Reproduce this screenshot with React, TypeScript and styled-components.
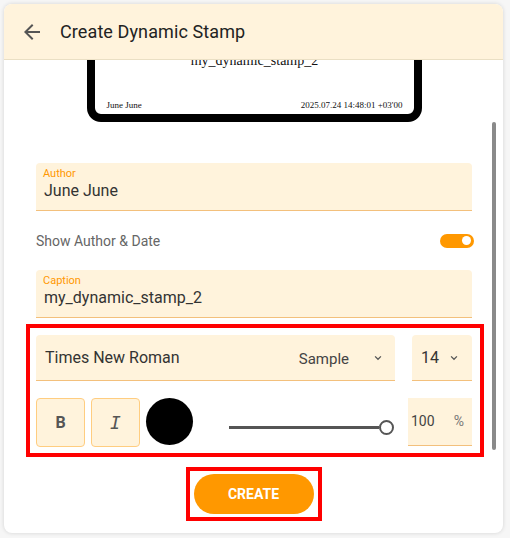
import React from "react";
import styled, { createGlobalStyle } from "styled-components";

const Global = createGlobalStyle`
  html, body { margin: 0; padding: 0; background: #f6f6f6; }
  body { font-family: Roboto, "Noto Sans", Arial, sans-serif; }
  * { box-sizing: border-box; }
`;

const Page = styled.div`
  padding: 4px 7px 5px 4px;
`;

const Dialog = styled.div`
  position: relative;
  width: 499px;
  height: 529px;
  background: #fff;
  border-radius: 8px;
  box-shadow: 0 0 4px rgba(0, 0, 0, 0.14);
  display: flex;
  flex-direction: column;
  overflow: hidden;
`;

const Header = styled.div`
  height: 56px;
  flex-shrink: 0;
  background: #fff3dc;
  border-bottom: 1px solid #eadfc4;
  display: flex;
  align-items: center;
  gap: 16px;
  padding-left: 16px;
  position: relative;
  z-index: 1;
`;

const Title = styled.div`
  font-size: 18px;
  color: #222;
  letter-spacing: 0.1px;
`;

const Scroll = styled.div`
  flex: 1;
  min-height: 0;
  overflow: hidden;
  display: flex;
  flex-direction: column;
  justify-content: flex-end;
`;

const Content = styled.div`
  flex-shrink: 0;
  display: flex;
  flex-direction: column;
  padding: 0 31px 5px 32px;
`;

const Stamp = styled.div`
  align-self: center;
  width: 335px;
  height: 120px;
  border: 8px solid #000;
  border-radius: 14px;
  background: #fff;
  display: flex;
  flex-direction: column;
  justify-content: flex-end;
  padding: 0 11px 3px 12px;
  font-family: "Liberation Serif", "Times New Roman", serif;
  color: #111;
  margin-bottom: 41px;
`;

const StampCaption = styled.div`
  text-align: center;
  font-size: 14px;
  line-height: 16px;
  margin-bottom: 30px;
`;

const StampFoot = styled.div`
  display: flex;
  justify-content: space-between;
  font-size: 9px;
  line-height: 12px;
`;

const Field = styled.div`
  height: 48px;
  background: #fff3dc;
  border-bottom: 1px solid #f3c07c;
  border-radius: 4px 4px 0 0;
  padding: 4px 8px 0 7px;
  display: flex;
  flex-direction: column;
`;

const Label = styled.div`
  font-size: 11px;
  line-height: 13px;
  color: #ff9800;
`;

const Value = styled.div`
  font-size: 16px;
  line-height: 22px;
  color: #333;
  padding-left: 1px;
`;

const ToggleRow = styled.div`
  height: 59px;
  display: flex;
  align-items: center;
  justify-content: space-between;
  font-size: 14px;
  color: #666;
`;

const Toggle = styled.div`
  width: 34px;
  height: 14px;
  border-radius: 7px;
  background: #ff9800;
  display: flex;
  align-items: center;
  justify-content: flex-end;
  padding: 0 3px;
  margin-right: -2px;
`;

const Knob = styled.div`
  width: 9px;
  height: 9px;
  border-radius: 50%;
  background: #fff;
`;

const Highlight = styled.div`
  border: 4px solid #ff0000;
  margin: ${(p: { $m: string }) => p.$m};
`;

const StyleBox = styled(Highlight)`
  padding: 7px 8px 6px 6px;
  display: flex;
  flex-direction: column;
  gap: 17px;
`;

const FontRow = styled.div`
  display: grid;
  grid-template-columns: 1fr 60px;
  gap: 17px;
`;

const Select = styled.div`
  height: 46px;
  background: #fff3dc;
  border-bottom: 1px solid #f3c07c;
  border-radius: 4px 4px 0 0;
  display: flex;
  align-items: center;
  padding: 0 ${(p: { $pr: number }) => p.$pr}px 0 9px;
  color: #333;
  font-size: 16px;
`;

const SelectText = styled.span`
  flex: 1;
`;

const Sample = styled.span`
  font-size: 15px;
  color: #444;
  margin-right: 24px;
  padding-top: 2px;
`;

const ToolRow = styled.div`
  display: flex;
  align-items: flex-start;
  gap: 6px;
`;

const ToolButton = styled.div<{ $italic?: boolean }>`
  width: 49px;
  height: 49px;
  background: #fff3dc;
  border: 1px solid #ffcd80;
  border-radius: 4px;
  display: flex;
  align-items: center;
  justify-content: center;
  color: #555;
  font-size: ${(p) => (p.$italic ? "18px" : "16px")};
  font-weight: ${(p) => (p.$italic ? 400 : 700)};
  font-style: ${(p) => (p.$italic ? "italic" : "normal")};
  font-family: ${(p) =>
    p.$italic ? `"DejaVu Sans Mono", "Liberation Mono", monospace` : `Roboto, Arial, sans-serif`};
`;

const Swatch = styled.div`
  width: 47px;
  height: 47px;
  border-radius: 50%;
  background: #000;
`;

const Slider = styled.div`
  flex: 1;
  margin: 22px 8px 0 30px;
  height: 15px;
  display: flex;
  align-items: center;
`;

const Track = styled.div`
  flex: 1;
  height: 3px;
  background: #555;
`;

const Thumb = styled.div`
  width: 15px;
  height: 15px;
  border-radius: 50%;
  border: 2px solid #555;
  background: #fff;
  flex-shrink: 0;
`;

const Opacity = styled.div`
  width: 64px;
  height: 48px;
  background: #fff3dc;
  border-bottom: 1px solid #f3c07c;
  display: flex;
  align-items: center;
  justify-content: space-between;
  padding: 0 8px 2px 3px;
  font-size: 14px;
  color: #444;
`;

const Percent = styled.span`
  color: #777;
`;

const Footer = styled.div`
  height: 71px;
  flex-shrink: 0;
  display: flex;
  justify-content: center;
  padding-top: 5px;
`;

const CreateBox = styled(Highlight)`
  padding: 3px 4px;
  align-self: flex-start;
`;

const CreateButton = styled.button`
  width: 120px;
  height: 40px;
  border: none;
  border-radius: 20px;
  background: #ff9800;
  color: #fff;
  font-family: Roboto, Arial, sans-serif;
  font-weight: 700;
  font-size: 14px;
  display: block;
`;

const ScrollThumb = styled.div`
  position: absolute;
  right: 7px;
  top: 118px;
  width: 4px;
  height: 328px;
  border-radius: 2px;
  background: #8a8a8a;
`;

const Chevron = ({ size = 10 }: { size?: number }) => (
  <svg width={size} height={size} viewBox="0 0 24 24" aria-hidden>
    <path d="M5 8l7 7 7-7" fill="none" stroke="#555" strokeWidth="3" />
  </svg>
);

const BackArrow = () => (
  <svg width="24" height="24" viewBox="0 0 24 24" aria-hidden>
    <path
      fill="#555"
      d="M20 11H7.83l5.59-5.59L12 4l-8 8 8 8 1.41-1.41L7.83 13H20v-2z"
    />
  </svg>
);

export default function App() {
  return (
    <>
      <Global />
      <Page>
        <Dialog>
          <Header>
            <BackArrow />
            <Title>Create Dynamic Stamp</Title>
          </Header>
          <Scroll>
            <Content>
              <Stamp>
                <StampCaption>my_dynamic_stamp_2</StampCaption>
                <StampFoot>
                  <span>June June</span>
                  <span>2025.07.24 14:48:01 +03'00</span>
                </StampFoot>
              </Stamp>
              <Field>
                <Label>Author</Label>
                <Value>June June</Value>
              </Field>
              <ToggleRow>
                <span>Show Author &amp; Date</span>
                <Toggle>
                  <Knob />
                </Toggle>
              </ToggleRow>
              <Field>
                <Label>Caption</Label>
                <Value>my_dynamic_stamp_2</Value>
              </Field>
              <StyleBox $m="6px -12px 0 -10px">
                <FontRow>
                  <Select $pr={12}>
                    <SelectText>Times New Roman</SelectText>
                    <Sample>Sample</Sample>
                    <Chevron />
                  </Select>
                  <Select $pr={13}>
                    <SelectText>14</SelectText>
                    <Chevron />
                  </Select>
                </FontRow>
                <ToolRow>
                  <ToolButton>B</ToolButton>
                  <ToolButton $italic>I</ToolButton>
                  <Swatch />
                  <Slider>
                    <Track />
                    <Thumb />
                  </Slider>
                  <Opacity>
                    <span>100</span>
                    <Percent>%</Percent>
                  </Opacity>
                </ToolRow>
              </StyleBox>
            </Content>
          </Scroll>
          <Footer>
            <CreateBox $m="0">
              <CreateButton>CREATE</CreateButton>
            </CreateBox>
          </Footer>
          <ScrollThumb />
        </Dialog>
      </Page>
    </>
  );
}
